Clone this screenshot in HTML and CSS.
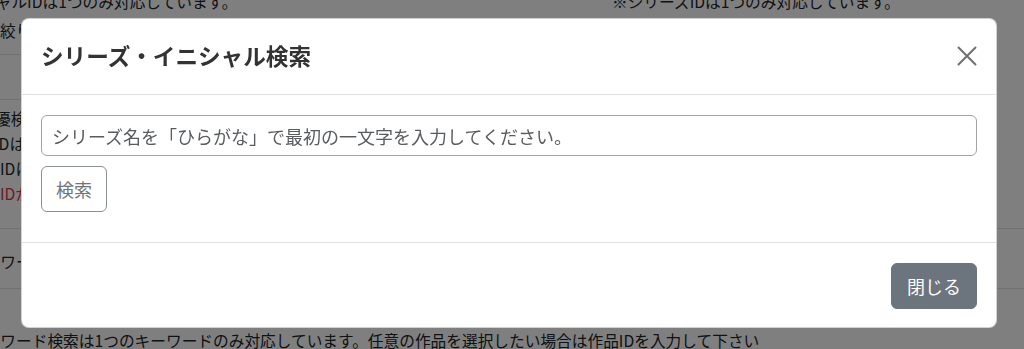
FILE: index.html
```html
<!DOCTYPE html>
<html lang="ja">
<head>
<meta charset="utf-8">
<title>シリーズ・イニシャル検索</title>
<link rel="stylesheet" href="styles.css">
</head>
<body>
<div class="bg">
  <div class="notes">
    <p class="note note-left">※イニシャルIDは1つのみ対応しています。</p>
    <p class="note">※シリーズIDは1つのみ対応しています。</p>
  </div>
  <div class="fld fld-b"><span class="lbl">絞り込み検索</span></div>
  <div class="fld fld-c"></div>
  <div class="row row-d">
    <p class="ln ln1">優検索は完全一致のみ対応しています。</p>
    <p class="ln ln2">IDは半角数字で入力してください。</p>
    <p class="ln">IDに該当する作品を表示します。</p>
    <p class="ln warn">IDが存在しない場合は表示されません。</p>
  </div>
  <div class="row row-e"><p class="ln kw">キーワード</p></div>
  <div class="row row-f"><p class="ln kw">キーワード検索は1つのキーワードのみ対応しています。任意の作品を選択したい場合は作品IDを入力して下さい</p></div>
</div>

<div class="overlay">
  <div class="modal">
    <div class="modal-header">
      <h5 class="modal-title">シリーズ・イニシャル検索</h5>
      <button class="btn-close" type="button" aria-label="Close">
        <svg width="20" height="20" viewBox="0 0 20 20"><path d="M1.5 1.5L18.5 18.5M18.5 1.5L1.5 18.5" stroke="#6f6f6f" stroke-width="2" fill="none" stroke-linecap="round"/></svg>
      </button>
    </div>
    <div class="modal-body">
      <input class="form-control" type="text" placeholder="シリーズ名を「ひらがな」で最初の一文字を入力してください。">
      <div><button class="btn btn-outline" type="button">検索</button></div>
    </div>
    <div class="modal-footer">
      <button class="btn btn-secondary" type="button">閉じる</button>
    </div>
  </div>
</div>
</body>
</html>
```

FILE: styles.css
```css
html, body {
  margin: 0;
  padding: 0;
  overflow: hidden;
  height: 349px;
}
body {
  font-family: "Noto Sans CJK JP", "Noto Sans", sans-serif;
  font-size: 15.7px;
  line-height: 24px;
  color: #212529;
  background: #fff;
}
p { margin: 0; }

.bg { margin-top: -10px; }
.notes {
  display: grid;
  grid-template-columns: 612px 1fr;
  height: 24px;
  white-space: nowrap;
}
.note-left { margin-left: -67px; }

.fld {
  width: 590px;
  border-bottom: 1px solid #dee2e6;
}
.fld-b { height: 35px; padding-top: 5px; }
.fld-c { height: 44px; }

.row { border-bottom: 1px solid #dee2e6; white-space: nowrap; }
.row-d { height: 122px; padding-top: 6px; }
.row-d .ln { line-height: 25px; }
.ln1 { margin-left: -5px; }
.ln2 { margin-left: -6px; }
.warn { color: #dc3545; }
.row-e { height: 38px; padding-top: 21px; }
.kw { margin-left: -31px; }
.row-f { border-bottom: none; padding-top: 40px; }

.overlay {
  position: fixed;
  inset: 0;
  background: rgba(0, 0, 0, 0.5);
}
.modal {
  margin: 18px 0 0 21px;
  width: 974px;
  background: #fff;
  border: 1px solid rgba(0, 0, 0, 0.175);
  border-radius: 8px;
}
.modal-header {
  display: flex;
  align-items: center;
  justify-content: space-between;
  padding: 19px 19px 20px 19px;
  border-bottom: 1px solid #dee2e6;
}
.modal-title {
  margin: 0;
  font-size: 22.6px;
  line-height: 36px;
  font-weight: 700;
  color: #333;
}
.btn-close {
  display: flex;
  padding: 0;
  border: 0;
  background: transparent;
  width: 20px;
  height: 20px;
}
.modal-body {
  padding: 20px 19px 30px 19px;
  display: flex;
  flex-direction: column;
  gap: 10px;
}
.form-control {
  box-sizing: border-box;
  width: 100%;
  height: 41px;
  font-family: inherit;
  font-size: 18px;
  line-height: 27px;
  padding: 6px 10px;
  border: 1px solid #a3a3a3;
  border-radius: 6px;
  color: #555;
  outline: none;
}
.form-control::placeholder { color: #595c5f; opacity: 1; }
.btn {
  font-family: inherit;
  font-size: 18px;
  line-height: 27px;
  padding: 9px 14px 8px;
  border-radius: 6px;
  border: 1px solid #6c757d;
}
.btn-outline {
  background: #fff;
  color: #6c757d;
  border-color: #8a8f94;
}
.modal-footer {
  display: flex;
  justify-content: flex-end;
  padding: 20px 19px 18px;
  border-top: 1px solid #dee2e6;
}
.btn-secondary {
  background: #6c757d;
  color: #fff;
  padding-left: 15px;
  padding-right: 15px;
}
```
